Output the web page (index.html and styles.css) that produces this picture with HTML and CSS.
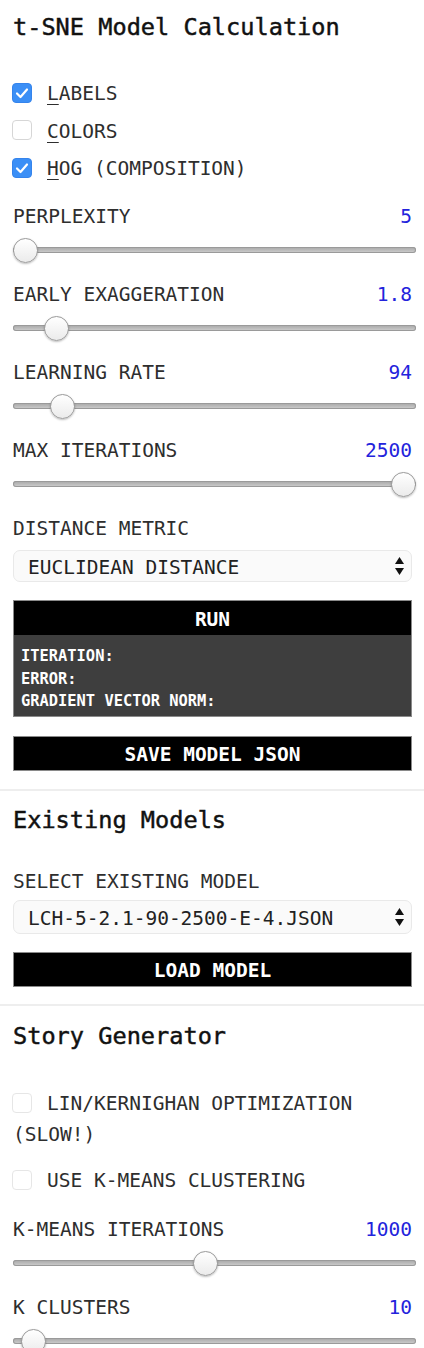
FILE: index.html
```html
<!DOCTYPE html>
<html lang="en">
<head>
<meta charset="utf-8">
<title>t-SNE Model Calculation</title>
<link rel="stylesheet" href="styles.css">
</head>
<body>
<div class="panel">
  <section class="sec sec-calc">
    <h2 class="title">t-SNE Model Calculation</h2>
    <div class="checks">
      <label class="check"><span class="cb on"><svg viewBox="0 0 20 20" width="20" height="20"><path d="M5 10.5 L8.5 14 L15 6.5" fill="none" stroke="#fff" stroke-width="2.2" stroke-linecap="round" stroke-linejoin="round"/></svg></span><span><u>L</u>ABELS</span></label>
      <label class="check"><span class="cb"></span><span><u>C</u>OLORS</span></label>
      <label class="check"><span class="cb on"><svg viewBox="0 0 20 20" width="20" height="20"><path d="M5 10.5 L8.5 14 L15 6.5" fill="none" stroke="#fff" stroke-width="2.2" stroke-linecap="round" stroke-linejoin="round"/></svg></span><span><u>H</u>OG (COMPOSITION)</span></label>
    </div>
    <div class="params">
      <div class="param">
        <div class="prow"><span>PERPLEXITY</span><span class="val">5</span></div>
        <input class="range" type="range" min="0" max="1000" value="0">
      </div>
      <div class="param">
        <div class="prow"><span>EARLY EXAGGERATION</span><span class="val">1.8</span></div>
        <input class="range" type="range" min="0" max="1000" value="81">
      </div>
      <div class="param">
        <div class="prow"><span>LEARNING RATE</span><span class="val">94</span></div>
        <input class="range" type="range" min="0" max="1000" value="97">
      </div>
      <div class="param">
        <div class="prow"><span>MAX ITERATIONS</span><span class="val">2500</span></div>
        <input class="range" type="range" min="0" max="1000" value="1000">
      </div>
    </div>
    <div class="prow">DISTANCE METRIC</div>
    <div class="selwrap sel-metric">
      <select class="sel"><option>EUCLIDEAN DISTANCE</option></select>
      <svg class="arrows" viewBox="0 0 9 20" width="9" height="20"><polygon points="0,8 4.5,1 9,8" fill="#111"/><polygon points="0,12 9,12 4.5,19" fill="#111"/></svg>
    </div>
    <button class="btn btn-run">RUN</button>
    <div class="stats">
      <div>ITERATION:</div>
      <div>ERROR:</div>
      <div>GRADIENT VECTOR NORM:</div>
    </div>
    <button class="btn btn-save">SAVE MODEL JSON</button>
  </section>

  <section class="sec sec-existing">
    <h2 class="title">Existing Models</h2>
    <div class="prow prow-gap">SELECT EXISTING MODEL</div>
    <div class="selwrap sel-model">
      <select class="sel"><option>LCH-5-2.1-90-2500-E-4.JSON</option></select>
      <svg class="arrows" viewBox="0 0 9 20" width="9" height="20"><polygon points="0,8 4.5,1 9,8" fill="#111"/><polygon points="0,12 9,12 4.5,19" fill="#111"/></svg>
    </div>
    <button class="btn btn-load">LOAD MODEL</button>
  </section>

  <section class="sec sec-story">
    <h2 class="title">Story Generator</h2>
    <label class="wrapcheck"><span class="cb light"></span>LIN/KERNIGHAN OPTIMIZATION (SLOW!)</label>
    <label class="check check-kmeans"><span class="cb light"></span><span>USE K-MEANS CLUSTERING</span></label>
    <div class="params params-story">
      <div class="param">
        <div class="prow"><span>K-MEANS ITERATIONS</span><span class="val">1000</span></div>
        <input class="range" type="range" min="0" max="1000" value="477">
      </div>
      <div class="param">
        <div class="prow"><span>K CLUSTERS</span><span class="val">10</span></div>
        <input class="range" type="range" min="0" max="1000" value="21">
      </div>
    </div>
  </section>
</div>
</body>
</html>
```

FILE: styles.css
```css
html, body {
  margin: 0;
  padding: 0;
  background: #fff;
}

body {
  font-family: "DejaVu Sans Mono", "Liberation Mono", monospace;
  font-size: 19.5px;
  color: #2e2e2e;
  overflow: hidden;
}

.panel {
  width: 424px;
}

.sec {
  padding: 0 12px 0 13px;
}

.sec + .sec {
  border-top: 2px solid #eeeeee;
}

.sec-calc {
  padding-top: 12px;
  padding-bottom: 18px;
}

.sec-existing {
  padding-top: 14px;
  padding-bottom: 17px;
}

.sec-story {
  padding-top: 15px;
}

.title {
  margin: 0;
  font-size: 23.6px;
  line-height: 31px;
  height: 30px;
  font-weight: normal;
  color: #111;
  -webkit-text-stroke: 0.45px #111;
  white-space: nowrap;
}

.checks {
  margin-top: 32px;
}

.check {
  display: flex;
  align-items: center;
  height: 37.5px;
  gap: 15px;
  margin-left: -1px;
}

.check > span:last-child {
  padding-top: 2px;
}

.check u {
  text-decoration: underline;
  text-decoration-thickness: 1px;
  text-underline-offset: 4px;
}

.cb {
  flex: none;
  display: inline-block;
  width: 20px;
  height: 20px;
  box-sizing: border-box;
  border: 1px solid #d6d6d6;
  border-radius: 4px;
  background: #fff;
}

.cb svg {
  display: block;
  margin: -1px;
}

.cb.on {
  background: #3b8ff6;
  border-color: #3584ec;
}

.cb.light {
  border-color: #e6e6e6;
}

.params {
  margin-top: 14.5px;
}

.param {
  margin-bottom: 14px;
}

.prow {
  display: flex;
  justify-content: space-between;
  height: 28px;
  line-height: 31px;
  white-space: nowrap;
}

.val {
  color: #2323dc;
}

.range {
  -webkit-appearance: none;
  appearance: none;
  display: block;
  width: calc(100% + 4px);
  height: 30px;
  margin: 6px 0 0 0;
  padding: 0;
  background: transparent;
}

.range::-webkit-slider-runnable-track {
  height: 6px;
  border-radius: 3px;
  background: linear-gradient(#a6a6a6, #cfcfcf);
  box-shadow: inset 0 0 0 1px #9a9a9a;
}

.range::-webkit-slider-thumb {
  -webkit-appearance: none;
  appearance: none;
  width: 25px;
  height: 25px;
  margin-top: -9.5px;
  border-radius: 50%;
  box-sizing: border-box;
  border: 1px solid #9a9a9a;
  background: linear-gradient(#ffffff, #ebebeb);
  box-shadow: 0 1px 2px rgba(0, 0, 0, 0.25);
}

.selwrap {
  position: relative;
}

.sel-metric {
  margin-top: 9px;
}

.sel-model {
  margin-top: 6px;
}

.sel {
  -webkit-appearance: none;
  appearance: none;
  display: block;
  width: 100%;
  box-sizing: border-box;
  margin: 0;
  padding: 2px 30px 0 14px;
  border: 1px solid #e9e9e9;
  border-radius: 7px;
  background: #fafafa;
  font-family: inherit;
  font-size: 19.5px;
  color: #222;
}

.sel-metric .sel {
  height: 32px;
}

.sel-model .sel {
  height: 34px;
}

.arrows {
  position: absolute;
  right: 8px;
  top: 50%;
  margin-top: -10px;
  pointer-events: none;
}

.btn {
  display: block;
  width: 100%;
  box-sizing: border-box;
  height: 35px;
  margin: 0;
  padding: 2px 0 0;
  border: 1px solid #8a8a8a;
  background: #000;
  color: #fff;
  font-family: inherit;
  font-size: 19.5px;
  font-weight: bold;
  line-height: 31px;
  text-align: center;
}

.btn-run {
  margin-top: 18px;
  border-bottom: none;
}

.stats {
  box-sizing: border-box;
  height: 82px;
  padding: 10px 7px 0;
  background: #3e3e3e;
  border: 1px solid #8a8a8a;
  border-top: none;
  color: #fff;
  font-size: 15.4px;
  font-weight: bold;
  line-height: 22.5px;
}

.btn-save {
  margin-top: 19px;
}

.prow-gap {
  margin-top: 31px;
}

.btn-load {
  margin-top: 18px;
}

.wrapcheck {
  display: block;
  margin-top: 35.5px;
  line-height: 31px;
  padding-top: 1px;
}

.wrapcheck .cb {
  vertical-align: -3px;
  margin-right: 15px;
  margin-left: -1px;
}

.check-kmeans {
  margin-top: 11.5px;
}

.params-story {
  margin-top: 15.5px;
}
```
